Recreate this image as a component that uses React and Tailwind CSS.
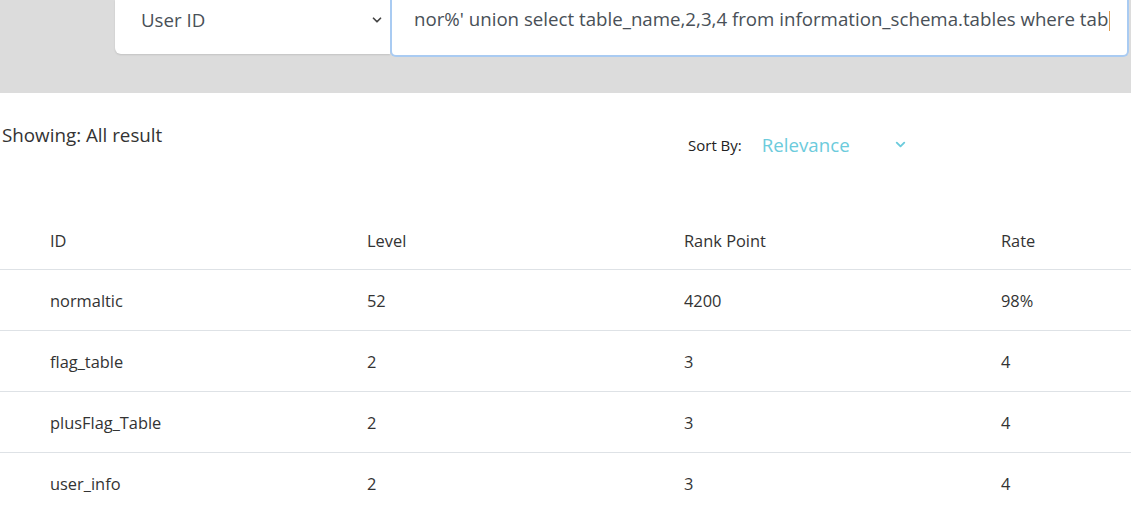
import { ChevronDown } from "lucide-react";

const rows = [
  { id: "normaltic", level: "52", rank: "4200", rate: "98%" },
  { id: "flag_table", level: "2", rank: "3", rate: "4" },
  { id: "plusFlag_Table", level: "2", rank: "3", rate: "4" },
  { id: "user_info", level: "2", rank: "3", rate: "4" },
];

export default function App() {
  return (
    <div
      className="w-[1131px] h-[507px] overflow-hidden bg-white text-[#333]"
      style={{ fontFamily: '"Open Sans", "Noto Sans", sans-serif' }}
    >
      {/* Search band */}
      <div className="h-[93px] bg-[#dcdcdc] flex items-start pl-[115px] pr-[2px]">
        <div className="w-[275px] h-[54px] bg-white rounded-bl-md shadow-[0_1px_2px_rgba(0,0,0,0.12)] flex items-center pl-[26px] pr-[6px]">
          <span className="flex-1 text-[18.7px] text-[#495057] pb-[14px]">User ID</span>
          <ChevronDown size={14} strokeWidth={3} className="text-[#444] mb-[14px]" />
        </div>
        <div className="flex-1 h-[57px] bg-white border-2 border-t-0 border-[#a9cbf2] rounded-b-md flex items-start pl-[22px] overflow-hidden">
          <span className="text-[18.7px] text-[#495057] whitespace-nowrap leading-none mt-[10px]">
            nor%' union select table_name,2,3,4 from information_schema.tables where tab
            <span className="inline-block w-px h-[20px] bg-[#e09b4a] align-middle ml-[1px]"></span>
          </span>
        </div>
      </div>

      {/* Result meta */}
      <div className="flex items-start h-[115px] pl-[2px]">
        <div className="text-[18.8px] text-[#333] mt-[28px] w-[686px]">Showing: All result</div>
        <div className="flex items-center mt-[38px]">
          <span className="text-[15px] text-[#222]">Sort By:</span>
          <span className="text-[18.7px] text-[#6ccbdc] ml-[20px] w-[131px]">Relevance</span>
          <ChevronDown size={15} strokeWidth={3} className="text-[#6ccbdc] -mt-[2px]" />
        </div>
      </div>

      {/* Table */}
      <table className="w-[1268px] border-collapse text-[16.4px] text-[#333]">
        <thead>
          <tr className="h-[61px] border-b border-[#dee2e6]">
            <th className="w-[317px] text-left font-normal pl-[50px] pt-[6px]">ID</th>
            <th className="w-[317px] text-left font-normal pl-[50px] pt-[6px]">Level</th>
            <th className="w-[317px] text-left font-normal pl-[50px] pt-[6px]">Rank Point</th>
            <th className="w-[317px] text-left font-normal pl-[50px] pt-[6px]">Rate</th>
          </tr>
        </thead>
        <tbody>
          {rows.map((r) => (
            <tr key={r.id} className="h-[61px] border-b border-[#dee2e6]">
              <td className="pl-[50px] pt-[3px]">{r.id}</td>
              <td className="pl-[50px] pt-[3px]">{r.level}</td>
              <td className="pl-[50px] pt-[3px]">{r.rank}</td>
              <td className="pl-[50px] pt-[3px]">{r.rate}</td>
            </tr>
          ))}
        </tbody>
      </table>
    </div>
  );
}
